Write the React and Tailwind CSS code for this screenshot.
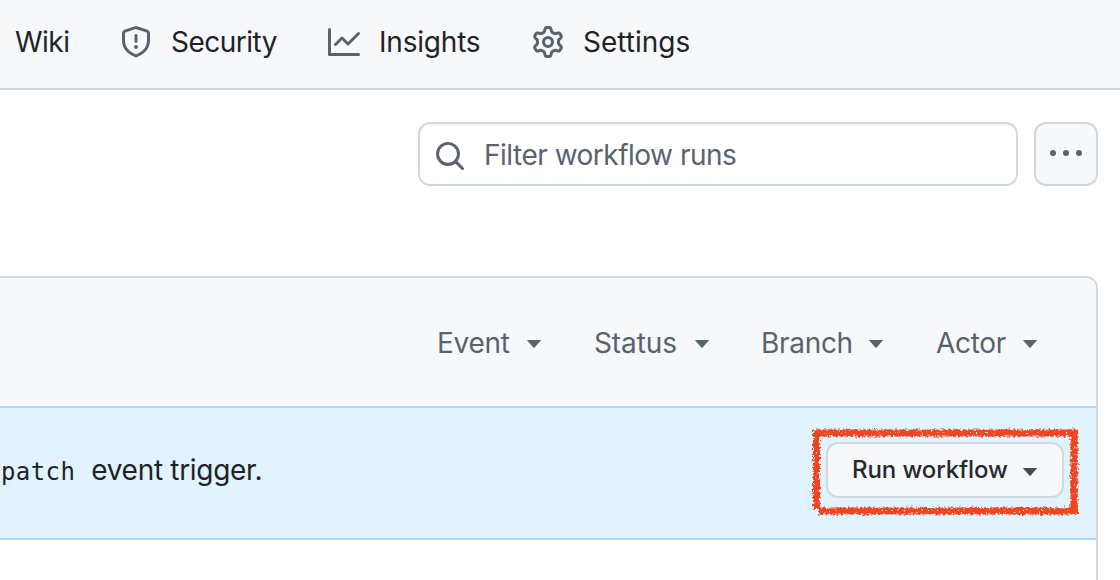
const ICONS = {
  shield:
    "M7.467.133a1.748 1.748 0 0 1 1.066 0l5.25 1.68A1.75 1.75 0 0 1 15 3.48V7c0 1.566-.32 3.182-1.303 4.682-.983 1.498-2.585 2.813-5.032 3.855a1.697 1.697 0 0 1-1.33 0c-2.447-1.042-4.049-2.357-5.032-3.855C1.32 10.182 1 8.566 1 7V3.48a1.75 1.75 0 0 1 1.217-1.667Zm.61 1.429a.25.25 0 0 0-.153 0l-5.25 1.68a.25.25 0 0 0-.174.238V7c0 1.358.275 2.666 1.057 3.86.784 1.194 2.121 2.34 4.366 3.297a.196.196 0 0 0 .154 0c2.245-.956 3.582-2.104 4.366-3.298C13.225 9.666 13.5 8.36 13.5 7V3.48a.251.251 0 0 0-.174-.237l-5.25-1.68ZM8.75 4.75v3a.75.75 0 0 1-1.5 0v-3a.75.75 0 0 1 1.5 0ZM9 10.5a1 1 0 1 1-2 0 1 1 0 0 1 2 0Z",
  graph:
    "M1.5 1.75V13.5h13.75a.75.75 0 0 1 0 1.5H.75a.75.75 0 0 1-.75-.75V1.75a.75.75 0 0 1 1.5 0Zm14.28 2.53-5.25 5.25a.75.75 0 0 1-1.06 0L7 7.06 4.28 9.78a.751.751 0 0 1-1.042-.018.751.751 0 0 1-.018-1.042l3.25-3.25a.75.75 0 0 1 1.06 0L10 7.94l4.72-4.72a.751.751 0 0 1 1.042.018.751.751 0 0 1 .018 1.042Z",
  gear:
    "M8 0a8.2 8.2 0 0 1 .701.031C9.444.095 9.99.645 10.16 1.29l.288 1.107c.018.066.079.158.212.224.231.114.454.243.668.386.123.082.233.09.299.071l1.103-.303c.644-.176 1.392.021 1.82.63.27.385.506.792.704 1.218.315.675.111 1.422-.364 1.891l-.814.806c-.049.048-.098.147-.088.294.016.257.016.515 0 .772-.01.147.038.246.088.294l.814.806c.475.469.679 1.216.364 1.891a7.977 7.977 0 0 1-.704 1.217c-.428.61-1.176.807-1.82.63l-1.102-.302c-.067-.019-.177-.011-.3.071a5.909 5.909 0 0 1-.668.386c-.133.066-.194.158-.211.224l-.29 1.106c-.168.646-.715 1.196-1.458 1.26a8.006 8.006 0 0 1-1.402 0c-.743-.064-1.289-.614-1.458-1.26l-.289-1.106c-.018-.066-.079-.158-.212-.224a5.738 5.738 0 0 1-.668-.386c-.123-.082-.233-.09-.299-.071l-1.103.303c-.644.176-1.392-.021-1.82-.63a8.12 8.12 0 0 1-.704-1.218c-.315-.675-.111-1.422.363-1.891l.815-.806c.05-.048.098-.147.088-.294a6.214 6.214 0 0 1 0-.772c.01-.147-.038-.246-.088-.294l-.815-.806C.635 6.045.431 5.298.746 4.623a7.92 7.92 0 0 1 .704-1.217c.428-.61 1.176-.807 1.82-.63l1.102.302c.067.019.177.011.3-.071.214-.143.437-.272.668-.386.133-.066.194-.158.211-.224l.29-1.106C6.009.645 6.556.095 7.299.03 7.53.01 7.764 0 8 0Zm-.571 1.525c-.036.003-.108.036-.137.146l-.289 1.105c-.147.561-.549.967-.998 1.189-.173.086-.34.183-.5.29-.417.278-.97.423-1.529.27l-1.103-.303c-.109-.03-.175.016-.195.045-.22.312-.412.644-.573.99-.014.031-.021.11.059.19l.815.806c.411.406.562.957.53 1.456a4.709 4.709 0 0 0 0 .582c.032.499-.119 1.05-.53 1.456l-.815.806c-.081.08-.073.159-.059.19.162.346.353.677.573.989.02.03.085.076.195.046l1.102-.303c.56-.153 1.113-.008 1.53.27.161.107.328.204.501.29.447.222.85.629.997 1.189l.289 1.105c.029.109.101.143.137.146a6.6 6.6 0 0 0 1.142 0c.036-.003.108-.036.137-.146l.289-1.105c.147-.561.549-.967.998-1.189.173-.086.34-.183.5-.29.417-.278.97-.423 1.529-.27l1.103.303c.109.029.175-.016.195-.045.22-.313.411-.644.573-.99.014-.031.021-.11-.059-.19l-.815-.806c-.411-.406-.562-.957-.53-1.456a4.709 4.709 0 0 0 0-.582c-.032-.499.119-1.05.53-1.456l.815-.806c.081-.08.073-.159.059-.19a6.464 6.464 0 0 0-.573-.989c-.02-.03-.085-.076-.195-.046l-1.102.303c-.56.153-1.113.008-1.53-.27a4.44 4.44 0 0 0-.501-.29c-.447-.222-.85-.629-.997-1.189l-.289-1.105c-.029-.11-.101-.143-.137-.146a6.6 6.6 0 0 0-1.142 0ZM11 8a3 3 0 1 1-6 0 3 3 0 0 1 6 0ZM9.5 8a1.5 1.5 0 1 0-3.001.001A1.5 1.5 0 0 0 9.5 8Z",
  search:
    "M10.68 11.74a6 6 0 0 1-7.922-8.982 6 6 0 0 1 8.982 7.922l3.04 3.04a.749.749 0 0 1-.326 1.275.749.749 0 0 1-.734-.215ZM11.5 7a4.499 4.499 0 1 0-8.997 0A4.499 4.499 0 0 0 11.5 7Z",
  kebab:
    "M8 9a1.5 1.5 0 1 0 0-3 1.5 1.5 0 0 0 0 3ZM1.5 9a1.5 1.5 0 1 0 0-3 1.5 1.5 0 0 0 0 3Zm13 0a1.5 1.5 0 1 0 0-3 1.5 1.5 0 0 0 0 3Z",
};

function Icon({ name, className = "" }) {
  return (
    <svg viewBox="0 0 16 16" fill="currentColor" className={`size-8 shrink-0 ${className}`}>
      <path d={ICONS[name]} />
    </svg>
  );
}

function Caret({ className = "" }) {
  return (
    <svg viewBox="0 0 16 8" fill="currentColor" className={`h-2 w-4 shrink-0 ${className}`}>
      <path d="M0.8 0H15.2L8.6 7.5Q8 8 7.4 7.5Z" />
    </svg>
  );
}

function Tab({ icon, label, width, tracking }) {
  return (
    <a className={`flex shrink-0 items-center ${width}`}>
      {icon && <Icon name={icon} className="mr-[19px] text-[#59636e]" />}
      <span className={tracking}>{label}</span>
    </a>
  );
}

function Filter({ label, width, tracking }) {
  return (
    <button className={`flex shrink-0 items-center justify-between ${width}`}>
      <span className={`whitespace-nowrap ${tracking}`}>{label}</span>
      <Caret className="mt-0.5" />
    </button>
  );
}

function CrayonFrame() {
  return (
    <svg
      viewBox="0 0 278 98"
      fill="none"
      className="pointer-events-none absolute top-[-20px] left-[-20px] h-[98px] w-[278px]"
    >
      <filter id="crayon" filterUnits="userSpaceOnUse" x="0" y="0" width="278" height="98" colorInterpolationFilters="sRGB">
        <feTurbulence type="fractalNoise" baseFrequency="0.4" numOctaves="3" seed="8" result="noise" />
        <feDisplacementMap in="SourceGraphic" in2="noise" scale="5.5" xChannelSelector="R" yChannelSelector="G" result="rough" />
        <feColorMatrix in="noise" type="matrix" values="0 0 0 0 0  0 0 0 0 0  0 0 0 0 0  0 0 -9 0 7.1" result="holes" />
        <feComposite in="rough" in2="holes" operator="in" />
      </filter>
      <path
        d="M7 11H272M268 8V92.5M13 89H272M10.5 8V87"
        stroke="#ef4520"
        strokeWidth="7.2"
        filter="url(#crayon)"
      />
    </svg>
  );
}

export default function App() {
  return (
    <div className="h-[580px] w-[1120px] overflow-hidden bg-white font-[Inter,'Liberation_Sans',sans-serif] text-[28px] leading-[42px] text-[#1f2328]">
      <nav className="flex h-[90px] items-center border-b-2 border-[#d1d9e0] bg-[#f6f8fa] pb-1 pl-[15px]">
        <Tab label="Wiki" width="w-[105px]" tracking="tracking-[-0.5px]" />
        <Tab icon="shield" label="Security" width="w-[208px]" tracking="tracking-[-0.5px]" />
        <Tab icon="graph" label="Insights" width="w-[204px]" tracking="tracking-[-0.2px]" />
        <Tab icon="gear" label="Settings" width="w-[160px]" tracking="tracking-[0px]" />
      </nav>

      <div className="flex justify-end gap-4 pt-8 pr-[22px]">
        <label className="flex h-16 w-[600px] items-center rounded-xl border-2 border-[#d1d9e0] pl-3.5 text-[#59636e] shadow-[inset_0_2px_0_rgba(31,35,40,0.04)]">
          <Icon name="search" className="mt-1" />
          <span className="ml-[18px] pt-0.5 tracking-[-0.5px] whitespace-nowrap">Filter workflow runs</span>
        </label>
        <button className="flex size-16 items-center justify-center rounded-xl border-2 border-[#d1d9e0] bg-[#f6f8fa] text-[#59636e]">
          <Icon name="kebab" />
        </button>
      </div>

      <section className="mt-[90px] mr-[22px] h-[320px] overflow-hidden rounded-tr-xl border-t-2 border-r-2 border-[#d1d9e0]">
        <header className="flex h-32 items-center justify-end bg-[#f6f8fa] pt-0.5 pr-[58px] text-[#59636e]">
          <Filter label="Event" width="w-[105px] mr-[52px]" tracking="tracking-[-0.3px]" />
          <Filter label="Status" width="w-[116px] mr-[51px]" tracking="tracking-[-0.1px]" />
          <Filter label="Branch" width="w-[123px] mr-[52px]" tracking="tracking-[-0.3px]" />
          <Filter label="Actor" width="w-[102px]" tracking="tracking-[-0.3px]" />
        </header>
        <div className="flex h-[134px] items-center justify-between border-y-2 border-[#b0d8ff] bg-[#e0f3ff] pr-8">
          <p className="flex items-baseline pb-[5px] whitespace-nowrap">
            <code className="ml-px font-['DejaVu_Sans_Mono','Liberation_Mono',monospace] text-[24px] tracking-[0.4px]">
              patch
            </code>
            <span className="ml-4 tracking-[-0.3px]">event trigger.</span>
          </p>
          <div className="relative mb-1.5">
            <button className="flex h-14 w-[238px] items-center justify-between rounded-xl border-2 border-[#d1d9e0] bg-[#f6f8fa] pr-6 pl-6 text-[24px] font-medium text-[#25292e]">
              <span className="tracking-[-0.1px] whitespace-nowrap">Run workflow</span>
              <Caret className="mt-[3px] text-[#454c54]" />
            </button>
            <CrayonFrame />
          </div>
        </div>
      </section>
    </div>
  );
}
